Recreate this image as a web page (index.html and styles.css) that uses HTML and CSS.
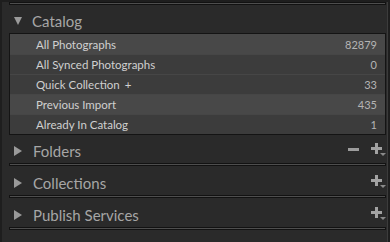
FILE: index.html
```html
<!DOCTYPE html>
<html lang="en">
<head>
    <meta charset="UTF-8">
    <meta name="viewport" content="width=device-width, initial-scale=1.0">
    <title>Library - Catalog</title>
    <link rel="stylesheet" href="styles.css">
</head>
<body>
    <div class="sidebar">
        <div class="rule rule-top"></div>

        <div class="panel-head">
            <span class="arrow arrow-down"></span>
            <span class="panel-title">Catalog</span>
        </div>
        <ul class="catalog-list">
            <li class="selected"><span>All Photographs</span><span class="count">82879</span></li>
            <li><span>All Synced Photographs</span><span class="count">0</span></li>
            <li><span>Quick Collection <span class="qc-plus">+</span></span><span class="count">33</span></li>
            <li class="selected"><span>Previous Import</span><span class="count">435</span></li>
            <li><span>Already In Catalog</span><span class="count">1</span></li>
        </ul>

        <div class="panel">
            <div class="panel-head">
                <span class="arrow arrow-right"></span>
                <span class="panel-title">Folders</span>
                <span class="actions">
                    <svg class="icon-minus" width="12" height="14" viewBox="0 0 12 14"><rect x="0" y="5" width="11" height="3" fill="#9c9c9c"/></svg>
                    <svg class="icon-add" width="16" height="14" viewBox="0 0 16 14"><rect x="1" y="4" width="11" height="3" fill="#a2a2a2"/><rect x="5" y="0" width="3" height="11" fill="#a2a2a2"/><polygon points="10,10 16,10 13,13" fill="#8a8a8a"/></svg>
                </span>
            </div>
            <div class="rule"></div>
        </div>

        <div class="panel">
            <div class="panel-head">
                <span class="arrow arrow-right"></span>
                <span class="panel-title">Collections</span>
                <span class="actions">
                    <svg class="icon-add" width="16" height="14" viewBox="0 0 16 14"><rect x="1" y="4" width="11" height="3" fill="#a2a2a2"/><rect x="5" y="0" width="3" height="11" fill="#a2a2a2"/><polygon points="10,10 16,10 13,13" fill="#8a8a8a"/></svg>
                </span>
            </div>
            <div class="rule"></div>
        </div>

        <div class="panel">
            <div class="panel-head">
                <span class="arrow arrow-right"></span>
                <span class="panel-title">Publish Services</span>
                <span class="actions">
                    <svg class="icon-add" width="16" height="14" viewBox="0 0 16 14"><rect x="1" y="4" width="11" height="3" fill="#a2a2a2"/><rect x="5" y="0" width="3" height="11" fill="#a2a2a2"/><polygon points="10,10 16,10 13,13" fill="#8a8a8a"/></svg>
                </span>
            </div>
            <div class="rule"></div>
        </div>
    </div>
</body>
</html>
```
FILE: styles.css
```css
body {
    margin: 0;
    background: #1e1e1e;
    font-family: Lato, 'Open Sans', sans-serif;
}
.sidebar {
    margin: 0 2px;
    padding: 0 1px 0 7px;
    min-height: 100vh;
    background: #2a2a2a;
    border-right: 1px solid #3c3c3c;
}
.rule {
    height: 1px;
    background: #4e4e4e;
    border: 1px solid #121212;
    margin-bottom: 1px;
}
.rule-top {
    margin: 2px 0 0;
}
.panel-head {
    display: flex;
    align-items: center;
    height: 28px;
    padding-top: 4px;
    box-sizing: border-box;
}
.arrow {
    width: 0;
    height: 0;
    margin-left: 5px;
}
.arrow-down {
    border-left: 4.5px solid transparent;
    border-right: 4.5px solid transparent;
    border-top: 8px solid #9a9a9a;
    margin-right: 10px;
}
.arrow-right {
    border-top: 5px solid transparent;
    border-bottom: 5px solid transparent;
    border-left: 8px solid #9a9a9a;
    margin-right: 11px;
}
.panel-title {
    font-size: 15px;
    color: #a6a6a6;
}
.actions {
    margin-left: auto;
    display: flex;
    align-items: center;
    gap: 10px;
    margin-top: -3px;
}
.actions svg {
    display: block;
}
.catalog-list {
    list-style: none;
    margin: 0;
    padding: 0;
    background: #3c3c3c;
    border: 1px solid #141414;
}
.catalog-list li {
    display: flex;
    justify-content: space-between;
    align-items: center;
    height: 20px;
    box-sizing: border-box;
    padding: 0 8px 0 26px;
    font-size: 11.5px;
    color: #d0d0d0;
}
.catalog-list li + li {
    border-top: 1px solid #464646;
}
.catalog-list li.selected {
    background: #484848;
}
.qc-plus {
    margin-left: 2px;
}
.count {
    font-size: 11px;
    color: #b4b4b4;
}
```
